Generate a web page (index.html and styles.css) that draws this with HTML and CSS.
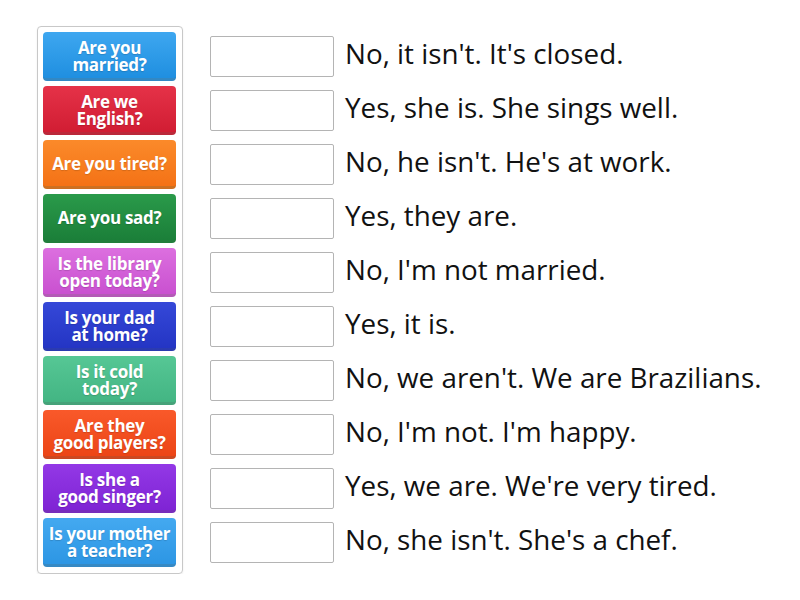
FILE: index.html
```html
<!DOCTYPE html>
<html>
<head>
<meta charset="utf-8">
<link rel="stylesheet" href="styles.css">
</head>
<body>
<div class="page">
  <div class="panel">
    <div class="btn c1">Are you<br>married?</div>
    <div class="btn c2">Are we<br>English?</div>
    <div class="btn c3">Are you tired?</div>
    <div class="btn c4">Are you sad?</div>
    <div class="btn c5">Is the library<br>open today?</div>
    <div class="btn c6">Is your dad<br>at home?</div>
    <div class="btn c7">Is it cold<br>today?</div>
    <div class="btn c8">Are they<br>good players?</div>
    <div class="btn c9">Is she a<br>good singer?</div>
    <div class="btn c10">Is your mother<br>a teacher?</div>
  </div>
  <div class="answers">
    <div class="row"><div class="box"></div><div class="txt">No, it isn't. It's closed.</div></div>
    <div class="row"><div class="box"></div><div class="txt">Yes, she is. She sings well.</div></div>
    <div class="row"><div class="box"></div><div class="txt">No, he isn't. He's at work.</div></div>
    <div class="row"><div class="box"></div><div class="txt">Yes, they are.</div></div>
    <div class="row"><div class="box"></div><div class="txt">No, I'm not married.</div></div>
    <div class="row"><div class="box"></div><div class="txt">Yes, it is.</div></div>
    <div class="row"><div class="box"></div><div class="txt">No, we aren't. We are Brazilians.</div></div>
    <div class="row"><div class="box"></div><div class="txt">No, I'm not. I'm happy.</div></div>
    <div class="row"><div class="box"></div><div class="txt">Yes, we are. We're very tired.</div></div>
    <div class="row"><div class="box"></div><div class="txt">No, she isn't. She's a chef.</div></div>
  </div>
</div>
</body>
</html>
```

FILE: styles.css
```css
html, body {
  margin: 0;
  padding: 0;
  background: #ffffff;
  font-family: "Open Sans", "Liberation Sans", sans-serif;
}
.page {
  display: flex;
  align-items: flex-start;
  padding: 26px 0 0 37px;
}
.panel {
  display: flex;
  flex-direction: column;
  gap: 5px;
  border: 1px solid #c8c8c8;
  border-radius: 4px;
  padding: 5px 6px 6px 5px;
  box-shadow: 0 1px 2px rgba(0,0,0,0.08);
}
.btn {
  width: 133px;
  height: 49px;
  box-sizing: border-box;
  border-radius: 4px;
  display: flex;
  align-items: center;
  justify-content: center;
  text-align: center;
  color: #fff;
  font-weight: 700;
  font-size: 17px;
  line-height: 17px;
  letter-spacing: -0.3px;
  white-space: nowrap;
  border-bottom: 3px solid rgba(0,0,0,0.18);
  padding-top: 1px;
  text-shadow: 0 1px 1px rgba(0,0,0,0.15);
}
.c1 { background: linear-gradient(#3ea7f0, #1f8fe0); }
.c2 { background: linear-gradient(#e53248, #d11d33); }
.c3 { background: linear-gradient(#fb8a2a, #f47216); }
.c4 { background: linear-gradient(#2a9a4a, #1b7f39); }
.c5 { background: linear-gradient(#dc6fdf, #c951d0); }
.c6 { background: linear-gradient(#3548d8, #2435c4); }
.c7 { background: linear-gradient(#56c795, #43b583); }
.c8 { background: linear-gradient(#f9592a, #ec4516); }
.c9 { background: linear-gradient(#9338e6, #7f24d4); }
.c10 { background: linear-gradient(#44a9f0, #2d96e4); }
.answers {
  display: flex;
  flex-direction: column;
  gap: 13px;
  margin-left: 27px;
  padding-top: 10px;
}
.row {
  display: flex;
  align-items: center;
  height: 41px;
}
.box {
  width: 124px;
  height: 41px;
  box-sizing: border-box;
  border: 1px solid #b4b4b4;
  border-radius: 2px;
  background: #fff;
  flex-shrink: 0;
}
.txt {
  margin-left: 11px;
  font-size: 27.8px;
  line-height: 34px;
  color: #111;
  white-space: nowrap;
  margin-top: -7px;
}
```
